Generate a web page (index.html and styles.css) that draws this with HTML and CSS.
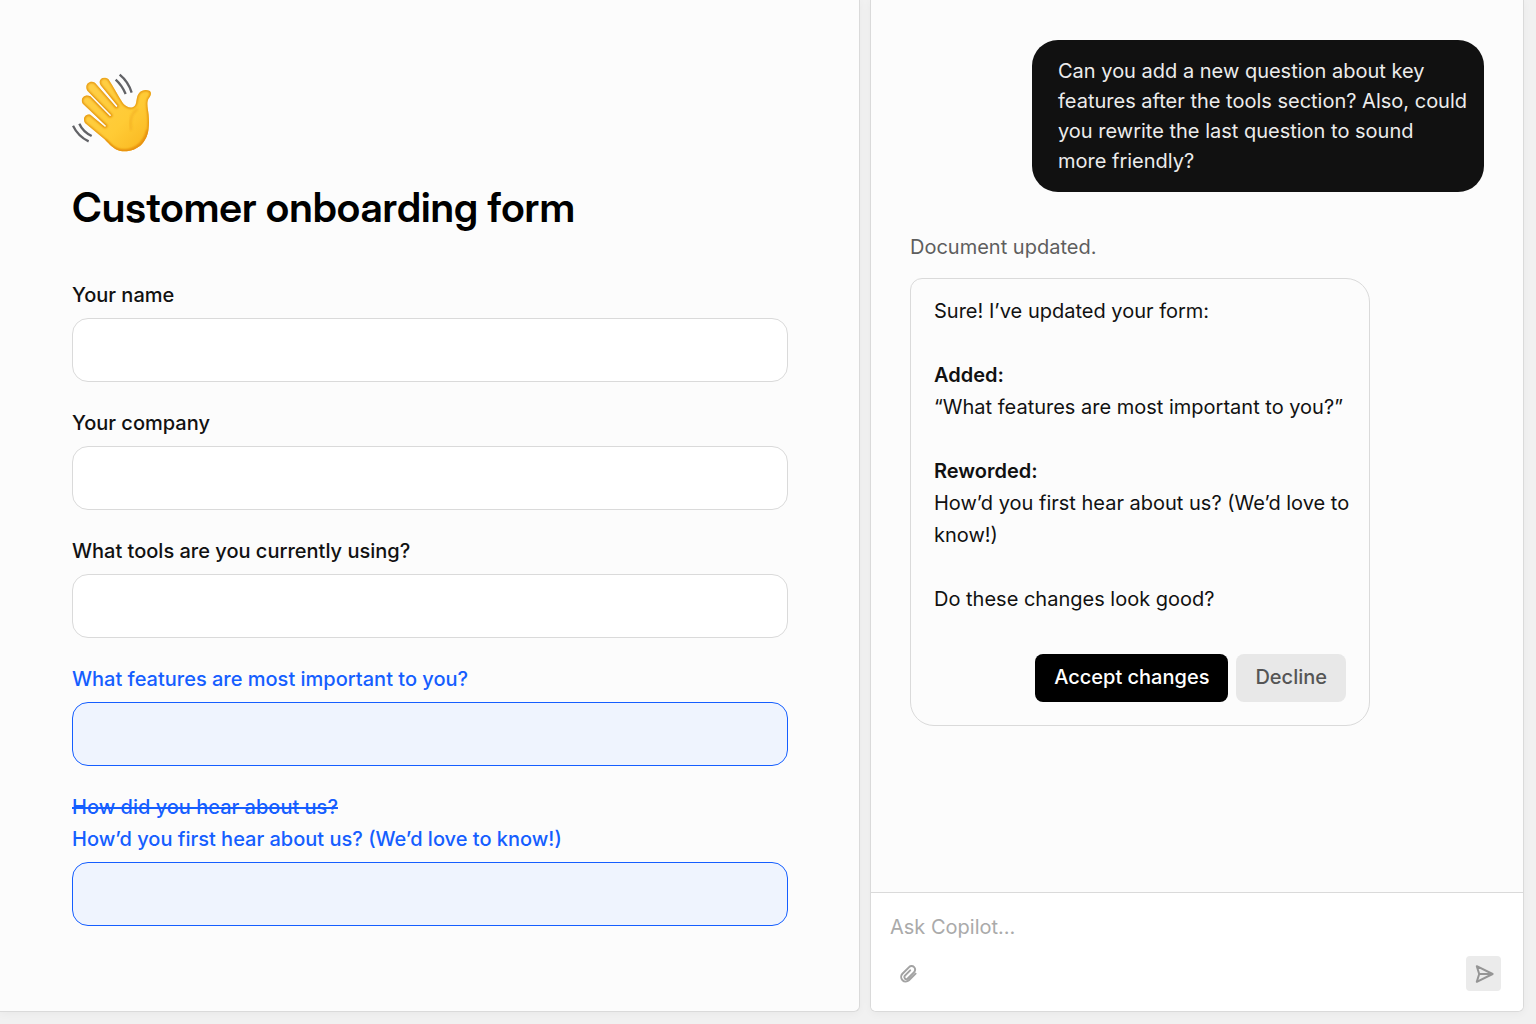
FILE: index.html
```html
<!DOCTYPE html>
<html lang="en">
<head>
<meta charset="utf-8">
<meta name="viewport" content="width=device-width, initial-scale=1">
<title>Customer onboarding form</title>
<link rel="stylesheet" href="styles.css">
</head>
<body>
<div class="app">
  <main class="panel document">
    <svg class="wave" viewBox="36 36 240 240" role="img" aria-label="Waving hand">
      <defs>
        <linearGradient id="skin" x1="0" y1="0" x2="1" y2="1">
          <stop offset="0" stop-color="#ffd04a"/>
          <stop offset="0.6" stop-color="#ffcb35"/>
          <stop offset="1" stop-color="#f9b41d"/>
        </linearGradient>
        <path id="hand" d="M75 189C67 176 75 161 91 164L135 201L139 198L70 133C57 117 74 100 91 109L150 169L154 166L82 92C72 75 88 59 105 68L169 142L173 138L122 76C112 60 128 46 145 57C162 82 173 105 189 130C200 143 217 148 226 135C231 126 228 109 238 98C245 91 256 88 268 92C276 97 273 107 267 114C258 127 264 145 266 164C269 203 266 230 246 252C226 273 190 281 166 267C149 256 143 246 130 235Z"/>
        <clipPath id="hand-clip"><use href="#hand"/></clipPath>
        <filter id="soften" x="-20%" y="-20%" width="140%" height="140%"><feGaussianBlur stdDeviation="3"/></filter>
      </defs>
      <use href="#hand" fill="url(#skin)"/>
      <g clip-path="url(#hand-clip)" fill="none">
        <use href="#hand" stroke="#dd8500" stroke-width="6" filter="url(#soften)"/>
        <path d="M213 208C208 181 215 160 231 148" stroke="#f5b426" stroke-width="7" stroke-linecap="round" filter="url(#soften)"/>
        <path d="M135 241C150 257 160 271 190 273C225 274 255 250 264 210" stroke="#e89110" stroke-width="9" filter="url(#soften)"/>
      </g>
      <g fill="none" stroke="#626367" stroke-width="7">
        <path d="M179 44Q205 65 215 98M167 59Q186 76 197 102M39 197Q54 229 86 244M58 191Q68 214 95 228"/>
      </g>
    </svg>
    <h1 class="title">Customer onboarding form</h1>
    <form class="fields">
      <div class="field">
        <label class="label" for="name">Your name</label>
        <input class="input" id="name" type="text">
      </div>
      <div class="field">
        <label class="label" for="company">Your company</label>
        <input class="input" id="company" type="text">
      </div>
      <div class="field">
        <label class="label" for="tools">What tools are you currently using?</label>
        <input class="input" id="tools" type="text">
      </div>
      <div class="field changed">
        <label class="label" for="features">What features are most important to you?</label>
        <input class="input" id="features" type="text">
      </div>
      <div class="field changed">
        <label class="label" for="source"><del class="line">How did you hear about us?</del><ins class="line">How’d you first hear about us? (We’d love to know!)</ins></label>
        <input class="input" id="source" type="text">
      </div>
    </form>
  </main>

  <aside class="panel copilot">
    <div class="thread">
      <p class="bubble">Can you add a new question about key features after the tools section? Also, could you rewrite the last question to sound more&nbsp;friendly?</p>
      <p class="status">Document updated.</p>
      <section class="reply">
        <p>Sure! I’ve updated your form:</p>
        <p><strong>Added:</strong><br>“What features are most important to you?”</p>
        <p><strong>Reworded:</strong><br>How’d you first hear about us? (We’d love to know!)</p>
        <p>Do these changes look good?</p>
        <div class="actions">
          <button class="button primary" type="button">Accept changes</button>
          <button class="button secondary" type="button">Decline</button>
        </div>
      </section>
    </div>
    <form class="composer">
      <input class="prompt" type="text" placeholder="Ask Copilot…" aria-label="Ask Copilot">
      <div class="tools">
        <button class="icon-button" type="button" aria-label="Attach a file">
          <svg class="icon" viewBox="0 0 20 20"><path d="M17.6 9.6L10.9 16.3a4.6 4.6 0 0 1-6.5-6.5l6.7-6.7a3.5 3.5 0 0 1 5 5l-6.6 6.6a2 2 0 0 1-2.8-2.8l5.5-5.5"/></svg>
        </button>
        <button class="icon-button send" type="button" aria-label="Send">
          <svg class="icon" viewBox="0 0 20 20"><path d="M2.8 2.2L18.6 10L2.8 17.8L5.2 10ZM5.2 10H18"/></svg>
        </button>
      </div>
    </form>
  </aside>
</div>
</body>
</html>
```
FILE: styles.css
```css
*,
*::before,
*::after {
  box-sizing: border-box;
}

body {
  margin: 0;
  background: #f1f1f1;
  color: #111;
  font: 400 20px/32px Inter, "Liberation Sans", sans-serif;
}

h1,
p {
  margin: 0;
}

input,
button {
  font: inherit;
}

.app {
  display: grid;
  grid-template-columns: minmax(0, 860fr) minmax(0, 654fr);
  gap: 10px;
  min-height: 100vh;
  padding: 0 12px 12px 0;
}

.panel {
  background: #fcfcfc;
  border: 1px solid #dadada;
  border-top: 0;
  box-shadow: 0 2px 8px rgba(0, 0, 0, 0.04);
}

.document {
  padding: 72px 71px 72px 72px;
  border-left: 0;
  border-radius: 0 0 6px 0;
}

.wave {
  display: block;
  width: 80px;
  height: 80px;
}

.title {
  margin: 31px 0 48px;
  color: #000;
  font-family: "Inter Display", Inter, "Liberation Sans", sans-serif;
  font-size: 41px;
  font-weight: 600;
  line-height: 48px;
}

.fields {
  display: grid;
  gap: 25px;
}

.field {
  display: grid;
  gap: 7px;
}

.label {
  font-weight: 500;
}

.line {
  display: block;
  width: fit-content;
}

ins.line {
  text-decoration: none;
}

.input {
  width: 100%;
  height: 64px;
  padding: 0 20px;
  background: #fff;
  border: 1px solid #dadada;
  border-radius: 16px;
}

.changed {
  color: #155eff;
}

.changed .input {
  background: #eff4fe;
  border-color: #155eff;
}

.copilot {
  display: flex;
  flex-direction: column;
  border-radius: 0 0 6px 6px;
  overflow: hidden;
}

.thread {
  display: flex;
  flex: 1;
  flex-direction: column;
  align-items: flex-start;
  padding: 40px 39px;
}

.bubble {
  align-self: flex-end;
  max-width: 452px;
  padding: 16px 14px 16px 26px;
  background: #111;
  border-radius: 26px;
  color: #ececec;
  line-height: 30px;
}

.status {
  margin: 39px 0 15px;
  color: #5e5e5e;
}

.reply {
  display: grid;
  gap: 32px;
  width: 100%;
  max-width: 460px;
  padding: 16px 15px 23px 23px;
  border: 1px solid #dadada;
  border-radius: 12px 24px 24px 24px;
}

.reply strong {
  font-weight: 600;
}

.actions {
  display: flex;
  justify-content: flex-end;
  gap: 8px;
  padding: 7px 8px 0 0;
}

.button {
  height: 48px;
  padding: 0 19px 2px;
  border: 0;
  border-radius: 8px;
  font-weight: 500;
}

.primary {
  background: #000;
  color: #fff;
}

.secondary {
  background: #e8e8e8;
  color: #555;
}

.composer {
  padding: 18px 22px 20px 19px;
  background: #fff;
  border-top: 1px solid #dadada;
}

.prompt {
  display: block;
  width: 100%;
  height: 32px;
  padding: 0;
  background: none;
  border: 0;
  color: #111;
}

.prompt::placeholder {
  color: #aaa;
  opacity: 1;
}

.tools {
  display: flex;
  justify-content: space-between;
  margin-top: 13px;
}

.icon-button {
  display: grid;
  place-items: center;
  width: 35px;
  height: 35px;
  padding: 0;
  background: none;
  border: 0;
  border-radius: 4px;
  color: #a3a3a3;
}

.send {
  background: #ebebeb;
  color: #959595;
}

.icon {
  width: 20px;
  height: 20px;
  fill: none;
  stroke: currentColor;
  stroke-width: 2;
  stroke-linecap: round;
  stroke-linejoin: round;
}
```
